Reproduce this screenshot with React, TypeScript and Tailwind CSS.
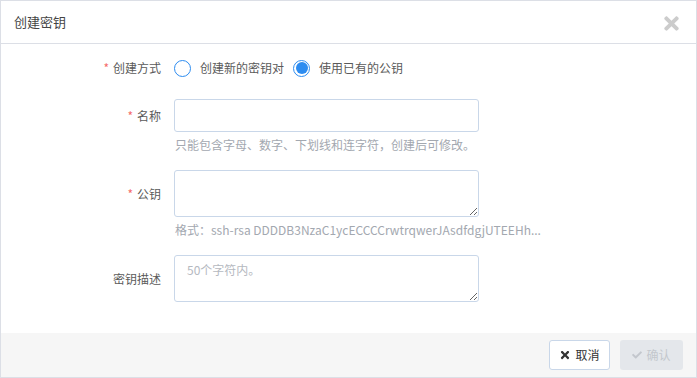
import { FaTimes, FaCheck } from "react-icons/fa";

const font = { fontFamily: '"Noto Sans CJK SC", "Liberation Sans", sans-serif' };

function Label({ text, required }: { text: string; required?: boolean }) {
    return (
        <div className="w-[161px] shrink-0 pr-[1px] text-right text-[12px] text-[#5a5a5a]">
            {required && <span className="mr-[4px] text-[#f56c6c]">*</span>}
            {text}
        </div>
    );
}

function Radio({ checked, label }: { checked?: boolean; label: string }) {
    return (
        <label className="flex items-center gap-[9px] text-[12px] text-[#5a5a5a]">
            <span className="flex h-[17px] w-[17px] items-center justify-center rounded-full border border-[#2d8cf0] bg-white">
                {checked && <span className="h-[12px] w-[12px] rounded-full bg-[#2d8cf0]" />}
            </span>
            {label}
        </label>
    );
}

export default function App() {
    return (
        <div style={font} className="flex h-[378px] w-[697px] flex-col border border-[#dcdfe6] bg-white">
            <div className="flex h-[43px] shrink-0 items-center justify-between border-b border-[#dcdfe6] pl-[13px] pr-[14px]">
                <span className="text-[13px] text-[#444]">创建密钥</span>
                <FaTimes className="mt-[3px] text-[#cccccc]" size={21} />
            </div>

            <div className="flex-1 pt-[14px]">
                <div className="flex h-[20px] items-center">
                    <Label text="创建方式" required />
                    <div className="ml-[12px] flex items-center gap-[9px]">
                        <Radio label="创建新的密钥对" />
                        <Radio label="使用已有的公钥" checked />
                    </div>
                </div>

                <div className="mt-[21px] flex items-center">
                    <Label text="名称" required />
                    <input className="ml-[12px] h-[33px] w-[305px] rounded-[3px] border border-[#c9d7e9] px-[10px] text-[12px] outline-none" />
                </div>
                <div className="ml-[174px] mt-[5px] h-[16px] text-[12px] leading-[16px] text-[#a3a8b0]">
                    只能包含字母、数字、下划线和连字符，创建后可修改。
                </div>

                <div className="mt-[17px] flex items-center">
                    <Label text="公钥" required />
                    <textarea className="ml-[12px] h-[47px] w-[305px] rounded-[3px] border border-[#c9d7e9] px-[10px] py-[6px] text-[12px] outline-none" />
                </div>
                <div className="ml-[174px] mt-[5px] h-[16px] text-[12px] leading-[16px] text-[#a3a8b0]">
                    格式：ssh-rsa DDDDB3NzaC1ycECCCCrwtrqwerJAsdfdgjUTEEHh...
                </div>

                <div className="mt-[17px] flex items-center">
                    <Label text="密钥描述" />
                    <textarea
                        placeholder="50个字符内。"
                        className="ml-[12px] h-[47px] w-[305px] rounded-[3px] border border-[#c9d7e9] px-[12px] py-[5px] text-[12px] outline-none placeholder:text-[#b5b9bf]"
                    />
                </div>
            </div>

            <div className="flex h-[44px] shrink-0 items-center justify-end gap-[10px] bg-[#f6f6f6] pr-[13px]">
                <button className="flex h-[30px] w-[61px] items-center justify-center gap-[4px] rounded-[3px] border border-[#c9d7e9] bg-white text-[12px] text-[#333]">
                    <FaTimes size={12} />
                    取消
                </button>
                <button className="flex h-[30px] w-[63px] items-center justify-center gap-[4px] rounded-[3px] bg-[#e4e7eb] text-[12px] text-[#c3c7cd]">
                    <FaCheck size={10} />
                    确认
                </button>
            </div>
        </div>
    );
}
